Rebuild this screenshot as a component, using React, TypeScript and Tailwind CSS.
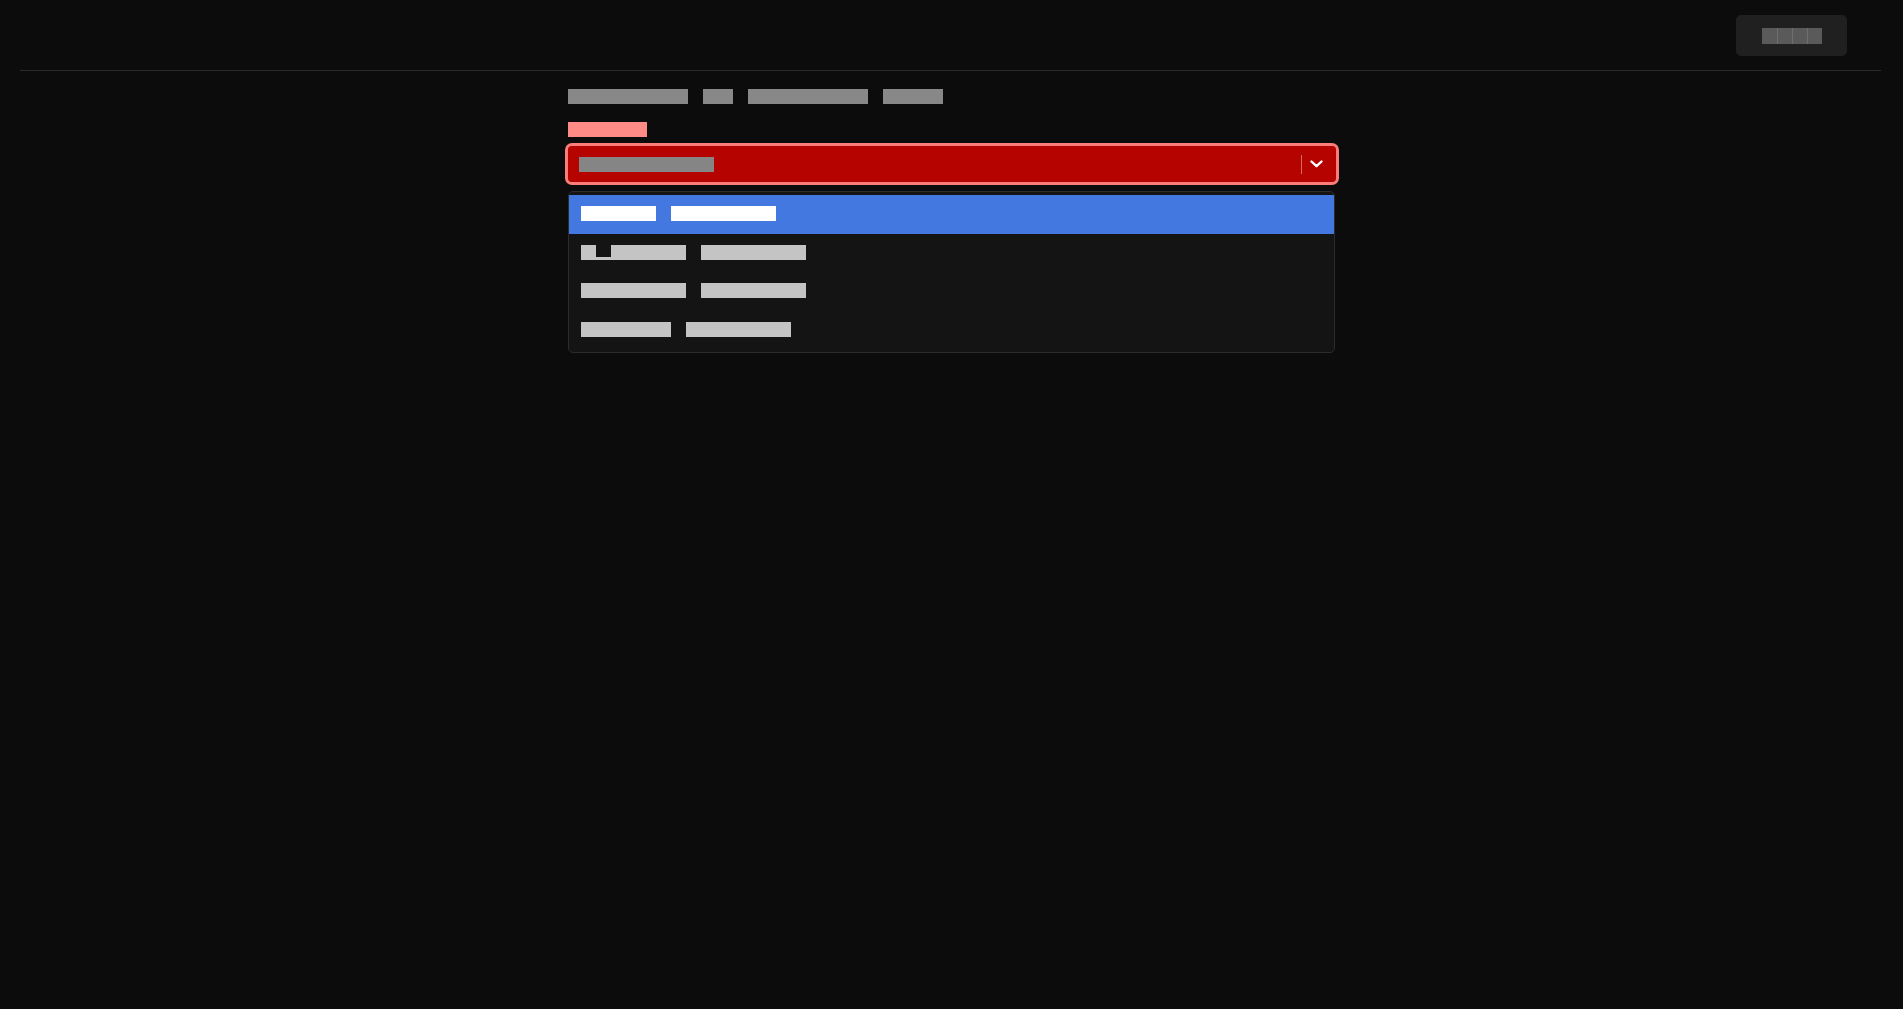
import React from "react";

function Block({ w, h = 15, c }: { w: number; h?: number; c: string }) {
  return <span className="inline-block shrink-0" style={{ width: w, height: h, backgroundColor: c }} />;
}

const rows: { a: number; b: number; notch?: boolean }[] = [
  { a: 75, b: 105 },
  { a: 105, b: 105, notch: true },
  { a: 105, b: 105 },
  { a: 90, b: 105 },
];

export default function App() {
  return (
    <div className="min-h-[1009px] w-full bg-[#0c0c0c]" style={{ fontFamily: '"Liberation Sans", Arial, sans-serif' }}>
      <header className="ml-5 mr-[22px] flex h-[71px] items-start justify-end border-b border-[#2b2b2b] pr-[34px] pt-[15px]">
        <button className="flex h-[41px] w-[111px] items-center justify-center rounded-[5px] bg-[#202020]">
          <span className="flex h-4 w-[60px]">
            <span className="h-4 w-[15px] bg-[#5a5a5a]" />
            <span className="h-4 w-[15px] border-l border-[#6e6e6e] bg-[#5a5a5a]" />
            <span className="h-4 w-[15px] border-l border-[#6e6e6e] bg-[#5a5a5a]" />
            <span className="h-4 w-[15px] border-l border-[#6e6e6e] bg-[#5a5a5a]" />
          </span>
        </button>
      </header>
      <main className="mx-auto w-[768px] pt-[18px]">
        <nav className="flex h-[15px] items-center gap-[15px]">
          <Block w={120} c="#888888" />
          <Block w={30} c="#888888" />
          <Block w={120} c="#888888" />
          <Block w={60} c="#888888" />
        </nav>
        <div className="mt-[18px] flex h-[15px]">
          <Block w={79} c="#ff8b86" />
        </div>
        <div className="mt-[9px] flex h-[36px] items-center rounded-[4px] bg-[#b50400] pl-[11px] pr-[13px] outline outline-[3px] outline-[#ff7d78]">
          <Block w={135} c="#858585" />
          <div className="flex-1" />
          <span className="mr-[8px] h-[19px] w-px bg-[#d86a66]" />
          <svg width="13" height="8" viewBox="0 0 13 8" fill="none">
            <path d="M1.5 1.5 L6.5 6.2 L11.5 1.5" stroke="#ffffff" strokeWidth="2.4" strokeLinecap="round" strokeLinejoin="round" />
          </svg>
        </div>
        <div className="mt-[9px] w-[767px] rounded-[5px] border border-[#2c2c2c] bg-[#141414] py-[3px]">
          {rows.map((r, i) => (
            <div
              key={i}
              className={`flex items-start gap-[15px] pl-[12px] pt-[11px] ${i === 0 ? "bg-[#4378e0]" : ""}`}
              style={{ height: i % 2 === 0 ? 39 : 38 }}
            >
              {r.notch ? (
                <span className="relative inline-block h-[15px] w-[105px] bg-[#c4c4c4]">
                  <span className="absolute left-[15px] top-0 h-[12px] w-[15px] bg-[#141414]" />
                </span>
              ) : (
                <Block w={r.a} c={i === 0 ? "#ffffff" : "#c4c4c4"} />
              )}
              <Block w={r.b} c={i === 0 ? "#ffffff" : "#c4c4c4"} />
            </div>
          ))}
        </div>
      </main>
    </div>
  );
}
